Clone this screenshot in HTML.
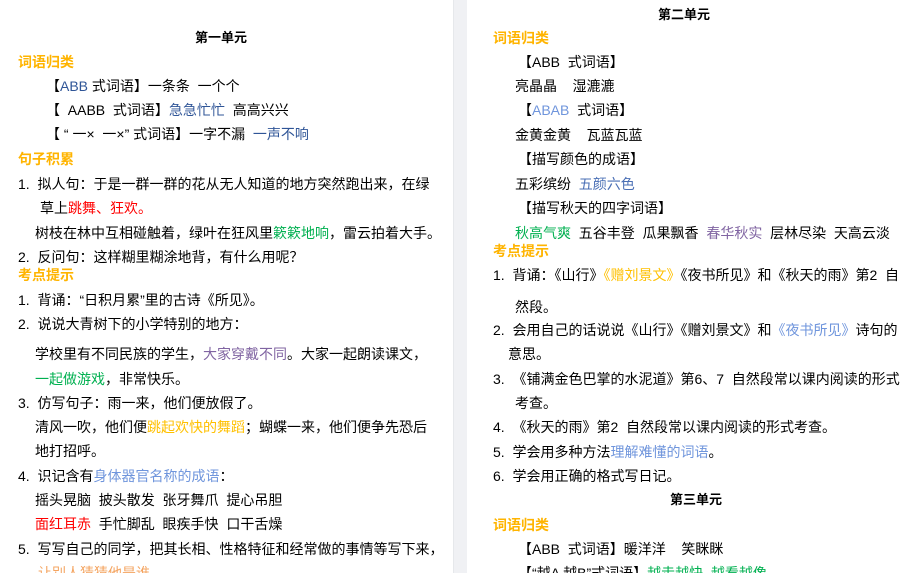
<!DOCTYPE html>
<html><head><meta charset="utf-8"><style>
html,body{margin:0;padding:0;width:918px;height:573px;overflow:hidden;background:#fff;}
body{position:relative;font-family:"Liberation Sans","Noto Sans CJK SC",sans-serif;color:#000;}
.l{position:absolute;white-space:nowrap;font-size:14px;line-height:18px;}
.b{font-weight:bold;font-size:13px;}
.o{color:#ffb400;font-weight:bold;}
.bl{color:#2f5597;}
.lb{color:#6f95dc;}
.r{color:#ff0000;}
.g{color:#00b050;}
.p{color:#8064a2;}
.y{color:#ffc000;}
.or{color:#f4a460;}
.gap{position:absolute;left:453px;top:0;width:13px;height:573px;background:#f0f1f4;border-left:1px solid #e6e8eb;}
</style></head><body>
<div class="gap"></div>

<div class="l b" style="left:195px;top:29px">第一单元</div>
<div class="l o" style="left:18px;top:53px">词语归类</div>
<div class="l" style="left:46px;top:77px">【<span class="bl">ABB</span> 式词语】一条条&nbsp; 一个个</div>
<div class="l" style="left:46px;top:101px">【&nbsp; AABB&nbsp; 式词语】<span class="bl">急急忙忙</span>&nbsp; 高高兴兴</div>
<div class="l" style="left:46px;top:125px">【 “ 一×&nbsp; 一×” 式词语】一字不漏&nbsp; <span class="bl">一声不响</span></div>
<div class="l o" style="left:18px;top:150px">句子积累</div>
<div class="l" style="left:18px;top:175px">1.&nbsp; 拟人句：于是一群一群的花从无人知道的地方突然跑出来，在绿</div>
<div class="l" style="left:40px;top:199px">草上<span class="r">跳舞、狂欢。</span></div>
<div class="l" style="left:35px;top:224px">树枝在林中互相碰触着，绿叶在狂风里<span class="g">簌簌地响</span>，雷云拍着大手。</div>
<div class="l" style="left:18px;top:248px">2.&nbsp; 反问句：这样糊里糊涂地背，有什么用呢？</div>
<div class="l o" style="left:18px;top:266px">考点提示</div>
<div class="l" style="left:18px;top:291px">1.&nbsp; 背诵：“日积月累”里的古诗《所见》。</div>
<div class="l" style="left:18px;top:315px">2.&nbsp; 说说大青树下的小学特别的地方：</div>
<div class="l" style="left:35px;top:345px">学校里有不同民族的学生，<span class="p">大家穿戴不同</span>。大家一起朗读课文，</div>
<div class="l" style="left:35px;top:370px"><span class="g">一起做游戏</span>，非常快乐。</div>
<div class="l" style="left:18px;top:394px">3.&nbsp; 仿写句子：雨一来，他们便放假了。</div>
<div class="l" style="left:35px;top:418px">清风一吹，他们便<span class="y">跳起欢快的舞蹈</span>；蝴蝶一来，他们便争先恐后</div>
<div class="l" style="left:35px;top:442px">地打招呼。</div>
<div class="l" style="left:18px;top:467px">4.&nbsp; 识记含有<span class="lb">身体器官名称的成语</span>：</div>
<div class="l" style="left:35px;top:491px">摇头晃脑&nbsp; 披头散发&nbsp; 张牙舞爪&nbsp; 提心吊胆</div>
<div class="l" style="left:35px;top:515px"><span class="r">面红耳赤</span>&nbsp; 手忙脚乱&nbsp; 眼疾手快&nbsp; 口干舌燥</div>
<div class="l" style="left:18px;top:540px">5.&nbsp; 写写自己的同学，把其长相、性格特征和经常做的事情等写下来，</div>
<div class="l or" style="left:38px;top:564px">让别人猜猜他是谁</div>

<div class="l b" style="left:658px;top:6px">第二单元</div>
<div class="l o" style="left:493px;top:29px">词语归类</div>
<div class="l" style="left:518px;top:53px">【ABB&nbsp; 式词语】</div>
<div class="l" style="left:515px;top:77px">亮晶晶&nbsp;&nbsp;&nbsp; 湿漉漉</div>
<div class="l" style="left:518px;top:101px">【<span class="lb">ABAB</span>&nbsp; 式词语】</div>
<div class="l" style="left:515px;top:126px">金黄金黄&nbsp;&nbsp;&nbsp; 瓦蓝瓦蓝</div>
<div class="l" style="left:518px;top:150px">【描写颜色的成语】</div>
<div class="l" style="left:515px;top:175px">五彩缤纷&nbsp; <span style="color:#4a6fb5">五颜六色</span></div>
<div class="l" style="left:518px;top:199px">【描写秋天的四字词语】</div>
<div class="l" style="left:515px;top:224px"><span class="g">秋高气爽</span>&nbsp; 五谷丰登&nbsp; 瓜果飘香&nbsp; <span class="p">春华秋实</span>&nbsp; 层林尽染&nbsp; 天高云淡</div>
<div class="l o" style="left:493px;top:242px">考点提示</div>
<div class="l" style="left:493px;top:266px">1.&nbsp; 背诵：《山行》<span class="y">《赠刘景文》</span>《夜书所见》和《秋天的雨》第2&nbsp; 自</div>
<div class="l" style="left:515px;top:298px">然段。</div>
<div class="l" style="left:493px;top:321px">2.&nbsp; 会用自己的话说说《山行》《赠刘景文》和<span class="lb">《夜书所见》</span>诗句的</div>
<div class="l" style="left:508px;top:345px">意思。</div>
<div class="l" style="left:493px;top:370px">3.&nbsp; 《铺满金色巴掌的水泥道》第6、7&nbsp; 自然段常以课内阅读的形式</div>
<div class="l" style="left:515px;top:394px">考查。</div>
<div class="l" style="left:493px;top:418px">4.&nbsp; 《秋天的雨》第2&nbsp; 自然段常以课内阅读的形式考查。</div>
<div class="l" style="left:493px;top:443px">5.&nbsp; 学会用多种方法<span class="lb">理解难懂的词语</span>。</div>
<div class="l" style="left:493px;top:467px">6.&nbsp; 学会用正确的格式写日记。</div>
<div class="l b" style="left:670px;top:491px">第三单元</div>
<div class="l o" style="left:493px;top:516px">词语归类</div>
<div class="l" style="left:518px;top:540px">【ABB&nbsp; 式词语】暖洋洋&nbsp;&nbsp;&nbsp; 笑眯眯</div>
<div class="l" style="left:518px;top:564px">【“越A 越B”式词语】<span class="g">越走越快&nbsp; 越看越像</span></div>
</body></html>
